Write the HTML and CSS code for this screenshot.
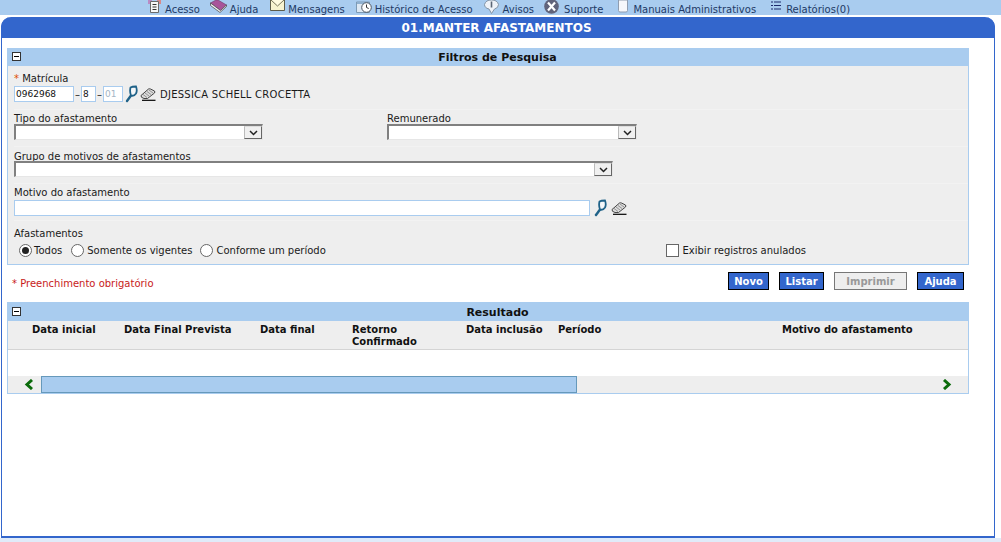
FILE: index.html
```html
<!DOCTYPE html>
<html lang="pt">
<head>
<meta charset="utf-8">
<title>Manter Afastamentos</title>
<link rel="stylesheet" href="styles.css">
</head>
<body>
<svg class="defs" width="0" height="0">
  <symbol id="lupa" viewBox="0 0 13 17">
    <path d="M6 10 L2 15.500" stroke="#1f6288" stroke-width="2.400" fill="none" stroke-linecap="round"/>
    <path d="M5.500 2 Q7 1 11 1 Q12.500 5 11 8 Q9 11 6 10 Q4.500 6 5.500 2 Z" fill="#f4f7f9" stroke="#1f6288" stroke-width="1.800"/>
  </symbol>
  <symbol id="borracha" viewBox="0 0 16 13">
    <path d="M1 7.500 L8.500 1 Q9.500 0.500 10.500 1 L14.500 3 Q15.200 4 14.500 5 L7.500 10.500 L4 10.500 Q0.500 9.500 1 7.500 Z" fill="#dcdcdc" stroke="#333" stroke-width="0.900"/>
    <path d="M3 6.500 L7 9.500 M5 5 L9 8 M7 3.500 L11 6.500 M9 2 L13 5" stroke="#8a8a8a" stroke-width="0.900"/>
    <path d="M2 12.300 H15.500" stroke="#000" stroke-width="1.200"/>
  </symbol>
</svg>

<nav class="topbar">
  <a class="navitem nav-acesso"><svg class="navicon" width="16" height="13" viewBox="0 0 16 13"><path d="M2 0h4v4H2z" fill="#b98ac4"/><path d="M11 0h4v4h-4z" fill="#d88a8a"/><path d="M4.500 1.500h8v11h-8z" fill="#f7f7f7" stroke="#6b6b6b"/><path d="M6.500 4.500h4M6.500 7h4M6.500 9.500h4" stroke="#333"/></svg>Acesso</a>
  <a class="navitem nav-ajuda"><svg class="navicon" width="17" height="13" viewBox="0 0 17 13"><path d="M0.500 3L6 0h2l8.500 5-6 5.500z" fill="#a8559a" stroke="#6e3a68" stroke-width=".6"/><path d="M0.500 3v2.500l9.500 7 6.500-6V5l-6 5.500z" fill="#efefef" stroke="#444" stroke-width=".7"/></svg>Ajuda</a>
  <a class="navitem nav-msg"><svg class="navicon" width="15" height="11" viewBox="0 0 15 11"><path d="M0.500 0h14v10H0.500z" fill="#f7f3cf"/><path d="M1 0l6.500 6L14 0" fill="#fffbe0" stroke="#77755a"/><path d="M0.500 0v10.500h14V0" fill="none" stroke="#5f5d4a"/></svg>Mensagens</a>
  <a class="navitem nav-hist"><svg class="navicon" width="16" height="14" viewBox="0 0 16 14"><path d="M0.500 2h13v10.500H0.500z" fill="#dde8f3" stroke="#7d9ab4"/><path d="M1 2h12v2H1z" fill="#8fb0cf"/><circle cx="10.500" cy="7.500" r="4.800" fill="#fff" stroke="#4c5560"/><path d="M10.500 4.500v3l2.200 1" stroke="#333" fill="none"/></svg>Histórico de Acesso</a>
  <a class="navitem nav-avisos"><svg class="navicon" width="15" height="14" viewBox="0 0 15 14"><path d="M7.500 0a7 6 0 0 1 7 4.500q0 3.500-4 4.500L7.500 13.500 5 9Q.500 8 .500 4.500A7 6 0 0 1 7.500 0z" fill="#eef2f8" stroke="#8393a4"/><path d="M7.500 1.500v6" stroke="#5b6675" stroke-width="1.600"/></svg>Avisos</a>
  <a class="navitem nav-suporte"><svg class="navicon" width="17" height="14" viewBox="0 0 17 14"><circle cx="8.500" cy="6.500" r="7.300" fill="#60637a"/><path d="M5 2.500l7 8M12 2.500l-7 8" stroke="#fff" stroke-width="2.200"/></svg>Suporte</a>
  <a class="navitem nav-manuais"><svg class="navicon" width="12" height="13" viewBox="0 0 12 13"><path d="M1.500 0h9v10.500q0 1.500-1.500 1.500H3q-1.500 0-1.500-1.500z" fill="#f5f7fb" stroke="#8f9db0"/></svg>Manuais Administrativos</a>
  <a class="navitem nav-rel"><svg class="navicon navicon-rel" width="10" height="9" viewBox="0 0 10 9"><path d="M0 1h2M0 4.500h2M0 8h2M3 1h7M3 4.500h7M3 8h7" stroke="#1c2a6c"/></svg>Relatórios(0)</a>
</nav>

<main class="frame">
  <h1 class="title">01.MANTER AFASTAMENTOS</h1>
  <div class="content">

    <section class="panel">
      <header class="panel-head"><span class="toggle"></span>Filtros de Pesquisa</header>
      <div class="panel-body">
        <div class="row row-mat">
          <label class="lbl"><span class="req">*</span> Matrícula</label>
          <div class="line">
            <input class="inp w-mat" type="text" value="0962968"><span class="dash">–</span><input class="inp w-dv" type="text" value="8"><span class="dash">–</span><input class="inp w-seq" type="text" value="01" disabled>
            <svg class="ic-lupa"><use href="#lupa"/></svg><svg class="ic-bor"><use href="#borracha"/></svg>
            <span class="nome">DJESSICA SCHELL CROCETTA</span>
          </div>
        </div>
        <div class="row row-two">
          <div class="col-a">
            <label class="lbl">Tipo do afastamento</label>
            <div class="sel w-sel1"><span class="sel-btn"><svg width="9" height="6" viewBox="0 0 9 6"><path d="M1 1l3.500 3.500L8 1" fill="none" stroke="#222" stroke-width="1.500"/></svg></span></div>
          </div>
          <div>
            <label class="lbl">Remunerado</label>
            <div class="sel w-sel2"><span class="sel-btn"><svg width="9" height="6" viewBox="0 0 9 6"><path d="M1 1l3.500 3.500L8 1" fill="none" stroke="#222" stroke-width="1.500"/></svg></span></div>
          </div>
        </div>
        <div class="row row-grupo">
          <label class="lbl">Grupo de motivos de afastamentos</label>
          <div class="sel w-sel3"><span class="sel-btn"><svg width="9" height="6" viewBox="0 0 9 6"><path d="M1 1l3.500 3.500L8 1" fill="none" stroke="#222" stroke-width="1.500"/></svg></span></div>
        </div>
        <div class="row row-motivo">
          <label class="lbl">Motivo do afastamento</label>
          <div class="line">
            <input class="inp w-mot" type="text">
            <svg class="ic-lupa ic-lupa2"><use href="#lupa"/></svg><svg class="ic-bor ic-bor2"><use href="#borracha"/></svg>
          </div>
        </div>
        <div class="row row-afast">
          <label class="lbl">Afastamentos</label>
          <div class="line radios">
            <label class="opt opt-1"><span class="radio on"></span>Todos</label>
            <label class="opt opt-2"><span class="radio"></span>Somente os vigentes</label>
            <label class="opt opt-3"><span class="radio"></span>Conforme um período</label>
            <label class="opt opt-chk"><span class="check"></span>Exibir registros anulados</label>
          </div>
        </div>
      </div>
    </section>

    <div class="actions">
      <span class="obrig">* Preenchimento obrigatório</span>
      <div class="btns">
        <button class="btn b-novo">Novo</button>
        <button class="btn b-listar">Listar</button>
        <button class="btn b-imp" disabled>Imprimir</button>
        <button class="btn b-ajuda">Ajuda</button>
      </div>
    </div>

    <section class="panel panel-res">
      <header class="panel-head"><span class="toggle"></span>Resultado</header>
      <div class="thead">
        <span>Data inicial</span>
        <span>Data Final Prevista</span>
        <span>Data final</span>
        <span>Retorno Confirmado</span>
        <span>Data inclusão</span>
        <span>Período</span>
        <span>Motivo do afastamento</span>
      </div>
      <div class="tbody"></div>
      <div class="scroll">
        <svg class="arr" width="10" height="11" viewBox="0 0 10 11"><path d="M8 1L3 5.500 8 10" fill="none" stroke="#0b6b0b" stroke-width="3"/></svg>
        <div class="thumb"></div>
        <svg class="arr arr-r" width="10" height="11" viewBox="0 0 10 11"><path d="M2 1l5 4.500L2 10" fill="none" stroke="#0b6b0b" stroke-width="3"/></svg>
      </div>
    </section>

  </div>
</main>
<div class="foot"></div>
</body>
</html>
```
FILE: styles.css
```css
* { box-sizing: border-box; }
html, body { margin: 0; padding: 0; height: 542px; overflow: hidden; background: #fff; }
body { font-family: "DejaVu Sans", Verdana, sans-serif; font-size: 10px; color: #1a1a1a; display: flex; flex-direction: column; }
.defs { display: block; height: 0; }

.topbar { height: 15px; background: #a9ccef; display: flex; align-items: flex-start; padding-left: 146px; color: #1e3a66; overflow: hidden; flex: none; margin-bottom: 2px; }
.navitem { display: flex; align-items: flex-end; line-height: 12px; height: 16px; font-size: 10px; white-space: nowrap; }
.navicon { margin-right: 3px; align-self: flex-start; flex: none; }
.navicon-rel { margin-top: 1px; margin-right: 5px; }
.nav-ajuda { margin-left: 10px; }
.nav-msg { margin-left: 12px; }
.nav-hist { margin-left: 11px; }
.nav-avisos { margin-left: 11px; }
.nav-avisos .navicon, .nav-suporte .navicon, .nav-manuais .navicon { margin-right: 4px; }
.nav-suporte { margin-left: 9px; }
.nav-manuais { margin-left: 14px; }
.nav-rel { margin-left: 15px; }

.frame { flex: none; height: 521px; width: 994px; margin-left: 1px; border: solid #3366cc; border-width: 0 1px 2px 1px; border-radius: 10px 10px 0 0; }
.title { margin: 0 -1px; height: 21px; line-height: 22px; padding-right: 3px; background: #3366cc; color: #fff; font-size: 12px; font-weight: bold; text-align: center; border-radius: 10px 10px 0 0; }
.content { padding: 10px 0 0 5px; }

.panel { width: 962px; background: #eee; border: 1px solid #a9ccef; border-top: 0; }
.panel-head { height: 18px; line-height: 20px; padding-left: 19px; background: #a9ccef; margin: 0 -1px; text-align: center; font-weight: bold; font-size: 11px; color: #111; position: relative; }
.toggle { position: absolute; left: 5px; top: 4px; width: 9px; height: 9px; background: #fff; border: 1px solid #333; }
.toggle::after { content: ""; position: absolute; left: 1px; top: 3px; width: 5px; height: 1px; background: #000; }

.panel-body { height: 198px; padding-left: 6px; }
.row { border-bottom: 1px solid #f2f2f2; }
.lbl { display: block; line-height: 12px; }
.req { color: #e04a00; }
.line { display: flex; align-items: center; }
.row-mat { height: 44px; padding-top: 7px; }
.row-two { height: 37px; display: flex; padding-top: 3px; }
.col-a { width: 373px; }
.row-grupo { height: 37px; padding-top: 4px; }
.row-motivo { height: 37px; padding-top: 3px; }
.row-afast { border: 0; padding-top: 7px; }

.inp { height: 16px; border: 1px solid #a9ccef; background: #fff; font: 9px "DejaVu Sans", Verdana, sans-serif; color: #111; padding: 0 1px; margin: 0; outline: 0; }
.inp:disabled { color: #a5b5c5; }
.w-mat { width: 60px; }
.w-dv { width: 15px; }
.w-seq { width: 20px; }
.w-mot { width: 576px; }
.dash { width: 7px; text-align: center; }
.ic-lupa { width: 13px; height: 18px; margin-left: 2px; flex: none; }
.ic-lupa2 { margin-left: 4px; }
.ic-bor { width: 16px; height: 13px; margin-left: 2px; flex: none; }
.ic-bor2 { margin-left: 4px; }
.nome { margin-left: 4px; letter-spacing: .25px; }

.sel { height: 16px; background: #fff; border: 2px solid #808080; border-right: 1px solid #e6e6e6; border-bottom: 1px solid #e6e6e6; position: relative; margin-top: -1px; }
.row-grupo .sel { margin-top: -2px; }
.sel-btn { position: absolute; right: 0; top: 0; width: 18px; height: 13px; background: #f0f0f0; border: 1px solid #666; border-left-color: #bbb; border-top-color: #ddd; display: flex; align-items: center; justify-content: center; }
.w-sel1 { width: 249px; }
.w-sel2 { width: 250px; }
.w-sel3 { width: 599px; }

.radios { height: 14px; margin-top: 3px; }
.opt { display: flex; align-items: center; }
.opt-1 { margin-left: 5px; }
.opt-1 .radio { margin-right: 2px; }
.opt-2 { margin-left: 9px; }
.opt-3 { margin-left: 8px; }
.opt-chk { margin-left: auto; margin-right: 162px; }
.radio { width: 13px; height: 13px; border: 1px solid #666; border-radius: 50%; background: #fff; margin-right: 3px; position: relative; flex: none; }
.radio.on::after { content: ""; position: absolute; left: 2px; top: 2px; width: 7px; height: 7px; border-radius: 50%; background: #222; }
.check { width: 13px; height: 13px; border: 1px solid #666; background: #fff; margin-right: 3px; flex: none; }

.actions { display: flex; justify-content: space-between; align-items: center; height: 18px; margin: 7px 5px 12px 5px; width: 952px; }
.obrig { color: #c81a1a; margin-top: 4px; }
.btns { display: flex; gap: 10px; }
.btn { height: 18px; padding: 0; margin: 0; background: #3366cc; color: #fff; border: 1px solid #000; font: bold 10px "DejaVu Sans", Verdana, sans-serif; }
.b-novo { width: 41px; }
.b-listar { width: 45px; }
.b-imp { width: 73px; background: #eee; color: #999; border-color: #777; }
.b-ajuda { width: 47px; }

.panel-res { height: 92px; background: #fff; display: flex; flex-direction: column; }
.panel-res .panel-head { height: 19px; line-height: 21px; flex: none; }
.panel-res .toggle { top: 5px; }
.thead { height: 29px; flex: none; background: #eee; border-bottom: 1px solid #d4d4d4; display: grid; grid-template-columns: 92px 136px 92px 114px 92px 224px 1fr; padding: 3px 0 0 24px; font-weight: bold; line-height: 12px; color: #111; }
.thead span:nth-child(4) { width: 70px; }
.tbody { height: 26px; flex: none; }
.scroll { height: 17px; flex: none; background: #eee; display: flex; align-items: center; padding: 0 16px; }
.arr { flex: none; }
.thumb { width: 536px; height: 17px; margin-left: 7px; background: #a9ccef; border: 1px solid #6699bb; }
.arr-r { margin-left: auto; }

.foot { flex: 1; background: #e0ebf9; }
```
